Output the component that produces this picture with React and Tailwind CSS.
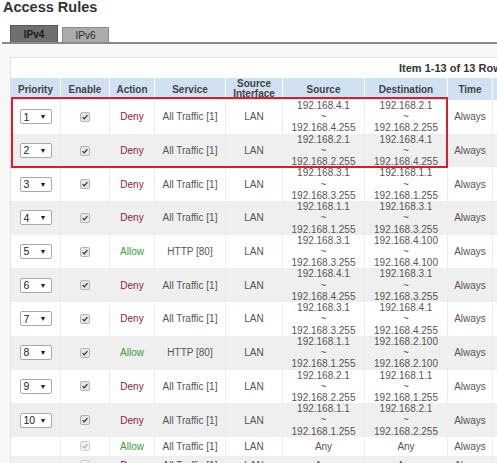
import React from 'react';

const rows = [
  { p: '1', action: 'Deny', service: 'All Traffic [1]', src: ['192.168.4.1', '192.168.4.255'], dst: ['192.168.2.1', '192.168.2.255'] },
  { p: '2', action: 'Deny', service: 'All Traffic [1]', src: ['192.168.2.1', '192.168.2.255'], dst: ['192.168.4.1', '192.168.4.255'] },
  { p: '3', action: 'Deny', service: 'All Traffic [1]', src: ['192.168.3.1', '192.168.3.255'], dst: ['192.168.1.1', '192.168.1.255'] },
  { p: '4', action: 'Deny', service: 'All Traffic [1]', src: ['192.168.1.1', '192.168.1.255'], dst: ['192.168.3.1', '192.168.3.255'] },
  { p: '5', action: 'Allow', service: 'HTTP [80]', src: ['192.168.3.1', '192.168.3.255'], dst: ['192.168.4.100', '192.168.4.100'] },
  { p: '6', action: 'Deny', service: 'All Traffic [1]', src: ['192.168.4.1', '192.168.4.255'], dst: ['192.168.3.1', '192.168.3.255'] },
  { p: '7', action: 'Deny', service: 'All Traffic [1]', src: ['192.168.3.1', '192.168.3.255'], dst: ['192.168.4.1', '192.168.4.255'] },
  { p: '8', action: 'Allow', service: 'HTTP [80]', src: ['192.168.1.1', '192.168.1.255'], dst: ['192.168.2.100', '192.168.2.100'] },
  { p: '9', action: 'Deny', service: 'All Traffic [1]', src: ['192.168.2.1', '192.168.2.255'], dst: ['192.168.1.1', '192.168.1.255'] },
  { p: '10', action: 'Deny', service: 'All Traffic [1]', src: ['192.168.1.1', '192.168.1.255'], dst: ['192.168.2.1', '192.168.2.255'] },
];

const grid = 'grid grid-cols-[50px_49px_45px_71px_57px_82px_83px_45px_40px]';
const cell = 'flex items-center justify-center text-center border-r border-[#ececec]';
const head = 'flex items-center justify-center border-r border-white';

function Check({ faded }) {
  return (
    <span
      className={`flex h-[10px] w-[10px] items-center justify-center rounded-[2px] border ${
        faded ? 'border-[#d0d0d0] bg-[#f2f2f2]' : 'border-[#b5b5b5] bg-[#e6e6e6]'
      }`}
    >
      <svg viewBox="0 0 10 10" className="h-[8px] w-[8px]">
        <path
          d="M2 5.2 L4.1 7.3 L8 2.6"
          fill="none"
          stroke={faded ? '#b0b0b0' : '#333'}
          strokeWidth="1.6"
        />
      </svg>
    </span>
  );
}

function Select({ value }) {
  return (
    <span className="flex h-[15px] w-[32px] items-center justify-between rounded-[2px] border border-[#a9a9a9] bg-white pl-[3px] pr-[4px] text-[10.5px] leading-none text-[#222]">
      <span>{value}</span>
      <span className="text-[7px]">▼</span>
    </span>
  );
}

function Range({ ip }) {
  return (
    <div className="flex flex-col leading-[11.2px]">
      <span>{ip[0]}</span>
      <span>~</span>
      <span>{ip[1]}</span>
    </div>
  );
}

function Row({ r, even, short }) {
  const actionColor = r.action === 'Allow' ? 'text-[#3c9a35]' : 'text-[#8e2333]';
  return (
    <div className={`${grid} ${short ? 'h-[19px]' : 'h-[33.7px]'} ${even ? 'bg-[#efefef]' : 'bg-white'}`}>
      <div className={cell}>{r.p && <Select value={r.p} />}</div>
      <div className={cell}><Check faded={!r.p} /></div>
      <div className={`${cell} ${actionColor}`}>{r.action}</div>
      <div className={cell}>{r.service}</div>
      <div className={cell}>LAN</div>
      <div className={cell}>{Array.isArray(r.src) ? <Range ip={r.src} /> : r.src}</div>
      <div className={cell}>{Array.isArray(r.dst) ? <Range ip={r.dst} /> : r.dst}</div>
      <div className={cell}>Always</div>
      <div className={cell}></div>
    </div>
  );
}

export default function App() {
  return (
    <div
      className="relative h-[463px] w-[497px] overflow-hidden bg-white text-[10px] text-[#555]"
      style={{ fontFamily: '"Liberation Sans", Arial, sans-serif' }}
    >
      <h1 className="pl-[3px] text-[14.5px] font-bold leading-[15px] text-[#333]">Access Rules</h1>

      <div className="mt-[10px] flex items-end gap-[4px] pl-[10px]">
        <div className="flex h-[17px] w-[48px] items-center justify-center border border-b-0 border-[#555] bg-[#6f6f6f] text-[10px] font-bold text-[#1a1a1a]">
          IPv4
        </div>
        <div className="flex h-[15px] w-[47px] items-center justify-center border border-b-0 border-[#8c8c8c] bg-[#ababab] text-[10px] text-[#2a2a2a]">
          IPv6
        </div>
      </div>
      <div className="ml-[2px] h-[2px] bg-[#8a8a8a]" />

      <div className="bg-[#f8f8f8] pl-[10px] pt-[13px]">
        <div className="w-[540px] border-l border-t border-[#e2e2e2] bg-white">
          <div className="flex h-[20px] items-center pl-[388px] text-[11px] font-bold text-[#333]">
            Item 1-13 of 13 Rows
          </div>
          <div className={`${grid} h-[22px] bg-[#cfe1f2] font-bold text-[#444]`}>
            <div className={head}>Priority</div>
            <div className={head}>Enable</div>
            <div className={head}>Action</div>
            <div className={head}>Service</div>
            <div className={`${head} flex-col leading-[10px]`}>
              <span>Source</span>
              <span>Interface</span>
            </div>
            <div className={head}>Source</div>
            <div className={head}>Destination</div>
            <div className={head}>Time</div>
            <div className={head}></div>
          </div>
          {rows.map((r, i) => (
            <Row key={r.p} r={r} even={i % 2 === 1} />
          ))}
          <Row r={{ p: '', action: 'Allow', service: 'All Traffic [1]', src: 'Any', dst: 'Any' }} short />
          <Row r={{ p: '', action: 'Deny', service: 'All Traffic [1]', src: 'Any', dst: 'Any' }} even short />
        </div>
      </div>

      <div className="pointer-events-none absolute left-[11px] top-[97px] h-[71px] w-[437px] border-2 border-[#d7202b]" />
    </div>
  );
}
